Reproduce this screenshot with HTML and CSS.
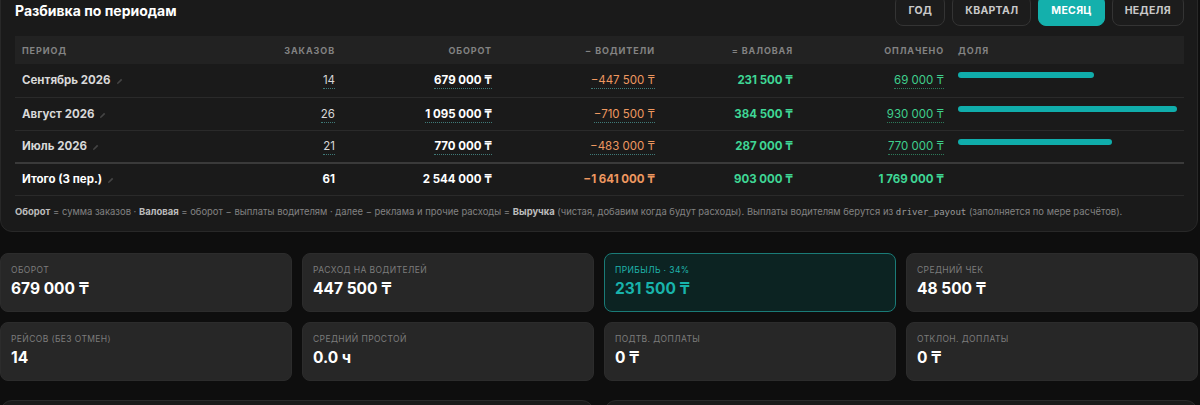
FILE: index.html
```html
<!DOCTYPE html>
<html lang="ru">
<head>
<meta charset="utf-8">
<title>Финансы — разбивка по периодам</title>
<link rel="stylesheet" href="styles.css">
</head>
<body>
<div class="page">
  <section class="panel">
    <div class="panel-head">
      <h2 class="panel-title">Разбивка по периодам</h2>
      <div class="seg">
        <button class="seg-btn">Год</button>
        <button class="seg-btn">Квартал</button>
        <button class="seg-btn is-active">Месяц</button>
        <button class="seg-btn">Неделя</button>
      </div>
    </div>

    <table class="breakdown">
      <colgroup>
        <col class="c-period"><col class="c-orders"><col class="c-turnover"><col class="c-drivers"><col class="c-gross"><col class="c-paid"><col class="c-share">
      </colgroup>
      <thead>
        <tr>
          <th class="left">Период</th>
          <th>Заказов</th>
          <th>Оборот</th>
          <th>− Водители</th>
          <th>= Валовая</th>
          <th>Оплачено</th>
          <th class="left">Доля</th>
        </tr>
      </thead>
      <tbody>
        <tr>
          <td class="left period">Сентябрь 2026<svg class="pen" viewBox="0 0 8 8"><path d="M1 7l.6-2L5.8.8l1.4 1.4L3 6.4z"/></svg></td>
          <td><span class="dot">14</span></td>
          <td class="strong"><span class="dot">679 000 ₸</span></td>
          <td class="neg"><span class="dot">−447 500 ₸</span></td>
          <td class="gross">231 500 ₸</td>
          <td class="paid"><span class="dot">69 000 ₸</span></td>
          <td class="share"><div class="bar" style="width:62%"></div></td>
        </tr>
        <tr>
          <td class="left period">Август 2026<svg class="pen" viewBox="0 0 8 8"><path d="M1 7l.6-2L5.8.8l1.4 1.4L3 6.4z"/></svg></td>
          <td><span class="dot">26</span></td>
          <td class="strong"><span class="dot">1 095 000 ₸</span></td>
          <td class="neg"><span class="dot">−710 500 ₸</span></td>
          <td class="gross">384 500 ₸</td>
          <td class="paid"><span class="dot">930 000 ₸</span></td>
          <td class="share"><div class="bar" style="width:100%"></div></td>
        </tr>
        <tr>
          <td class="left period">Июль 2026<svg class="pen" viewBox="0 0 8 8"><path d="M1 7l.6-2L5.8.8l1.4 1.4L3 6.4z"/></svg></td>
          <td><span class="dot">21</span></td>
          <td class="strong"><span class="dot">770 000 ₸</span></td>
          <td class="neg"><span class="dot">−483 000 ₸</span></td>
          <td class="gross">287 000 ₸</td>
          <td class="paid"><span class="dot">770 000 ₸</span></td>
          <td class="share"><div class="bar" style="width:70.3%"></div></td>
        </tr>
        <tr class="total">
          <td class="left period">Итого (3 пер.)<svg class="pen" viewBox="0 0 8 8"><path d="M1 7l.6-2L5.8.8l1.4 1.4L3 6.4z"/></svg></td>
          <td>61</td>
          <td>2 544 000 ₸</td>
          <td class="neg">−1 641 000 ₸</td>
          <td class="gross">903 000 ₸</td>
          <td class="gross">1 769 000 ₸</td>
          <td></td>
        </tr>
      </tbody>
    </table>

    <p class="note"><b>Оборот</b> = сумма заказов · <b>Валовая</b> = оборот − выплаты водителям · далее − реклама и прочие расходы = <b>Выручка</b> (чистая, добавим когда будут расходы). Выплаты водителям берутся из <code>driver_payout</code> (заполняется по мере расчётов).</p>
  </section>

  <div class="stats">
    <div class="stat"><div class="stat-label">Оборот</div><div class="stat-value">679 000 ₸</div></div>
    <div class="stat"><div class="stat-label">Расход на водителей</div><div class="stat-value">447 500 ₸</div></div>
    <div class="stat stat-accent"><div class="stat-label">Прибыль · 34%</div><div class="stat-value">231 500 ₸</div></div>
    <div class="stat"><div class="stat-label">Средний чек</div><div class="stat-value">48 500 ₸</div></div>
    <div class="stat"><div class="stat-label">Рейсов (без отмен)</div><div class="stat-value">14</div></div>
    <div class="stat"><div class="stat-label">Средний простой</div><div class="stat-value">0.0 ч</div></div>
    <div class="stat"><div class="stat-label">Подтв. доплаты</div><div class="stat-value">0 ₸</div></div>
    <div class="stat"><div class="stat-label">Отклон. доплаты</div><div class="stat-value">0 ₸</div></div>
  </div>

  <div class="lower">
    <section class="box"></section>
    <section class="box"></section>
  </div>
</div>
</body>
</html>
```

FILE: styles.css
```css
* { box-sizing: border-box; }

html, body {
  margin: 0;
  background: #0e0e0e;
  color: #f2f2f2;
  font-family: Inter, "Noto Sans", "DejaVu Sans", sans-serif;
  overflow: hidden;
}

/* content is scrolled a little past the top of the panel */
.page {
  margin-top: -20px;
  padding-right: 2px;
  display: flex;
  flex-direction: column;
}

/* ---------- breakdown panel ---------- */
.panel {
  background: #1a1a1a;
  border: 1px solid #282828;
  border-radius: 12px;
  padding: 14px 13px 13px 14px;
}

.panel-head {
  display: flex;
  align-items: center;
  justify-content: space-between;
  margin-bottom: 10px;
}

.panel-title {
  margin: 0;
  font-size: 14px;
  font-weight: 700;
  color: #fff;
}

.seg {
  display: flex;
  gap: 7px;
}

.seg-btn {
  height: 31px;
  padding: 0 12px;
  border: 1px solid #343434;
  border-radius: 8px;
  background: #1c1c1c;
  color: #c9c9c9;
  font-family: inherit;
  font-size: 10.5px;
  font-weight: 700;
  letter-spacing: 0.3px;
  text-transform: uppercase;
}

.seg-btn.is-active {
  background: #14b0ac;
  border-color: #14b0ac;
  color: #fff;
}

/* ---------- table ---------- */
.breakdown {
  width: 100%;
  border-collapse: collapse;
  table-layout: fixed;
  font-size: 11.5px;
}

.c-period { width: 247px; }
.c-orders { width: 80px; }
.c-turnover { width: 157px; }
.c-drivers { width: 163px; }
.c-gross { width: 138px; }
.c-paid { width: 151px; }

.breakdown th {
  background: #222;
  height: 28px;
  padding: 0 7px;
  text-align: right;
  font-size: 9px;
  font-weight: 700;
  letter-spacing: 0.9px;
  text-transform: uppercase;
  color: #838383;
}

.breakdown td {
  height: 33px;
  padding: 0 7px;
  text-align: right;
  border-bottom: 1px solid #2a2a2a;
  color: #d8d8d8;
  white-space: nowrap;
}

.breakdown .left { text-align: left; }

.period {
  font-weight: 700;
  color: #f4f4f4;
}

.pen {
  width: 7px;
  height: 7px;
  margin-left: 5px;
  fill: #444;
  vertical-align: -1px;
}

.dot {
  border-bottom: 1px dotted #3f7a78;
  padding-bottom: 1px;
}

.strong {
  font-weight: 700;
  color: #fff !important;
}

.neg { color: #ee9860 !important; }

.gross {
  color: #3fd695 !important;
  font-weight: 700;
}

.paid { color: #3fcf8d !important; }

.paid .dot { border-bottom-color: #2d7a5a; }

.share {
  vertical-align: top;
  padding-top: 8px !important;
}

.bar {
  height: 6px;
  border-radius: 3px;
  background: #10adab;
}

.total td {
  border-top: 2px solid #3a3a3a;
  font-weight: 700;
  color: #fff;
  height: 32px;
}

/* ---------- footnote ---------- */
.note {
  margin: 10px 0 0;
  font-size: 9.45px;
  line-height: 12px;
  color: #828282;
  white-space: nowrap;
}

.note b {
  color: #bdbdbd;
  font-weight: 700;
}

.note code {
  font-family: "DejaVu Sans Mono", "Liberation Mono", monospace;
  font-size: 9px;
  color: #9a9a9a;
}

/* ---------- stat cards ---------- */
.stats {
  margin-top: 21px;
  display: grid;
  grid-template-columns: repeat(4, 1fr);
  gap: 10px;
}

.stat {
  background: #272727;
  border: 1px solid #2c2c2c;
  border-radius: 8px;
  padding: 11px 10px 12px;
  height: 59px;
}

.stat-label {
  font-size: 8.5px;
  line-height: 11px;
  letter-spacing: 0.4px;
  text-transform: uppercase;
  color: #7c7c7c;
}

.stat-value {
  margin-top: 3px;
  font-size: 15.5px;
  line-height: 20px;
  font-weight: 700;
  color: #fff;
}

.stat-accent {
  background: #0c2322;
  border-color: #1a7b77;
}

.stat-accent .stat-label { color: #1fb3ac; }
.stat-accent .stat-value { color: #18b3ab; }

/* ---------- lower sections ---------- */
.lower {
  margin-top: 19px;
  display: grid;
  grid-template-columns: 1fr 1fr;
  gap: 10px;
}

.box {
  height: 120px;
  background: #1a1a1a;
  border: 1px solid #2a2a2a;
  border-radius: 12px;
}
```
